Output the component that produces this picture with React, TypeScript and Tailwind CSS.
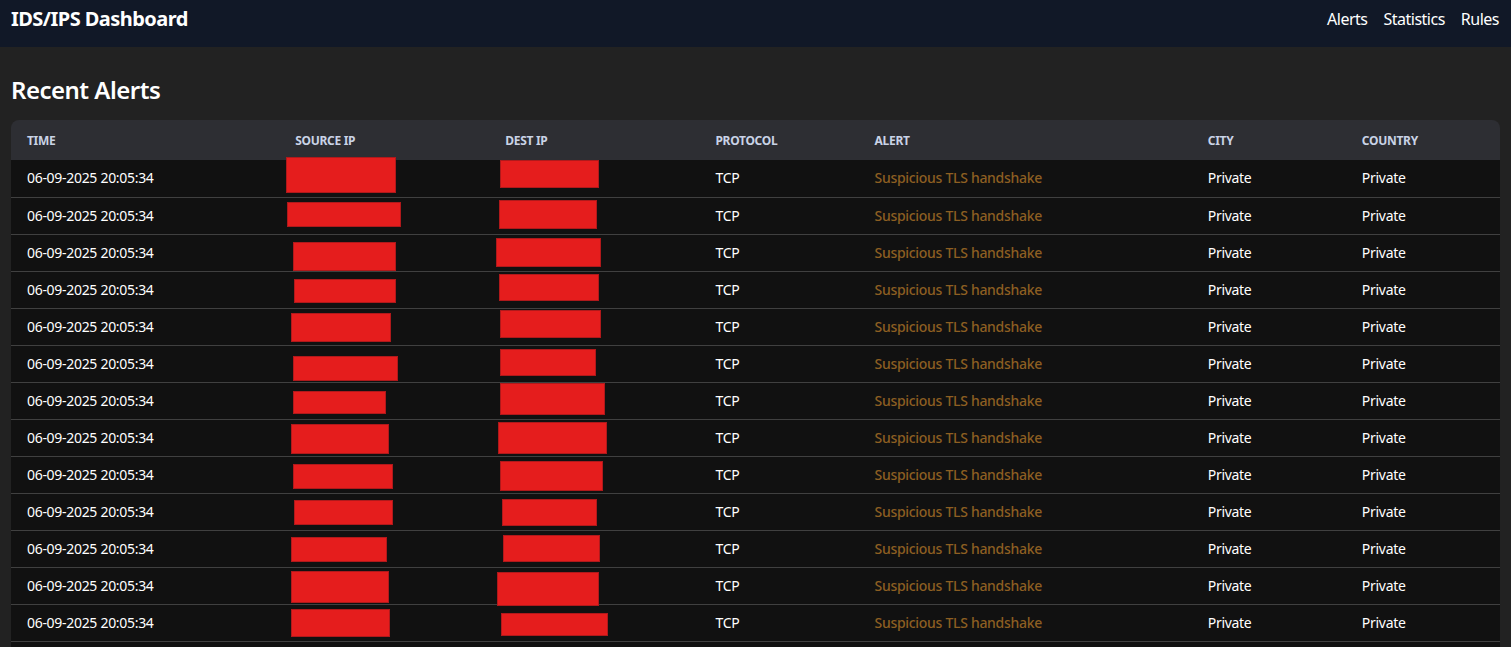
import React from "react";

type Box = [number, number, number, number];

type Alert = {
  time: string;
  protocol: string;
  alert: string;
  city: string;
  country: string;
  src: Box;
  dst: Box;
};

// redaction boxes: [left, top, width, height] relative to the cell
const redactions: { src: Box; dst: Box }[] = [
  { src: [7, -3, 110, 36], dst: [11, 0, 99, 28] },
  { src: [8, 4, 114, 25], dst: [10, 2, 98, 29] },
  { src: [14, 7, 103, 29], dst: [7, 3, 105, 29] },
  { src: [15, 7, 102, 24], dst: [10, 2, 100, 27] },
  { src: [12, 4, 100, 29], dst: [11, 1, 101, 28] },
  { src: [14, 10, 105, 25], dst: [11, 3, 96, 27] },
  { src: [14, 8, 93, 23], dst: [11, 0, 105, 32] },
  { src: [12, 4, 98, 30], dst: [9, 2, 109, 32] },
  { src: [14, 7, 100, 25], dst: [11, 4, 103, 30] },
  { src: [15, 6, 99, 25], dst: [13, 5, 95, 27] },
  { src: [12, 6, 96, 25], dst: [14, 4, 97, 27] },
  { src: [12, 3, 98, 32], dst: [8, 4, 102, 34] },
  { src: [12, 4, 99, 28], dst: [12, 8, 107, 23] },
  { src: [12, 8, 99, 28], dst: [12, 8, 100, 26] },
];

const alerts: Alert[] = redactions.map((r) => ({
  time: "06-09-2025 20:05:34",
  protocol: "TCP",
  alert: "Suspicious TLS handshake",
  city: "Private",
  country: "Private",
  src: r.src,
  dst: r.dst,
}));

function Redacted({ box }: { box: Box }) {
  const [left, top, width, height] = box;
  return (
    <div
      className="absolute bg-[#e51d1d] border border-[#b0191b]"
      style={{ left, top, width, height }}
    />
  );
}

export default function App() {
  return (
    <div
      className="min-h-screen bg-[#222222] text-white tracking-[-0.3px]"
      style={{ fontFamily: '"Noto Sans", "Open Sans", sans-serif' }}
    >
      <header className="h-[47px] bg-[#111827] px-[11px] pt-[5px] flex items-start justify-between">
        <h1 className="text-xl font-bold leading-7 tracking-[-0.55px]">IDS/IPS Dashboard</h1>
        <nav className="flex gap-4 pr-[1px] text-base leading-7 tracking-[-0.5px]">
          <a>Alerts</a>
          <a>Statistics</a>
          <a>Rules</a>
        </nav>
      </header>

      <main className="px-[11px] pt-[27px]">
        <h2 className="text-2xl font-semibold leading-8 mb-[14px] tracking-[-0.5px]">Recent Alerts</h2>
        <div className="rounded-lg overflow-hidden">
          <table className="w-full table-fixed border-collapse text-sm">
            <colgroup>
              <col className="w-[268px]" />
              <col className="w-[210px]" />
              <col className="w-[210px]" />
              <col className="w-[159px]" />
              <col className="w-[333px]" />
              <col className="w-[154px]" />
              <col className="w-[154px]" />
            </colgroup>
            <thead className="bg-[#2d2e33]">
              <tr className="h-[40px] text-left text-xs font-bold uppercase text-[#c9d3e6]">
                <th className="px-4 pt-[2px]">Time</th>
                <th className="px-4 pt-[2px]">Source IP</th>
                <th className="px-4 pt-[2px]">Dest IP</th>
                <th className="px-4 pt-[2px]">Protocol</th>
                <th className="px-4 pt-[2px]">Alert</th>
                <th className="px-4 pt-[2px]">City</th>
                <th className="px-4 pt-[2px]">Country</th>
              </tr>
            </thead>
            <tbody className="bg-[#111111]">
              {alerts.map((a, i) => (
                <tr key={i} className="h-[37px] border-b border-[#404040]">
                  <td className="px-4">{a.time}</td>
                  <td className="px-4 relative">
                    <Redacted box={a.src} />
                  </td>
                  <td className="px-4 relative">
                    <Redacted box={a.dst} />
                  </td>
                  <td className="px-4">{a.protocol}</td>
                  <td className="px-4 text-[#8d5f22] font-medium">{a.alert}</td>
                  <td className="px-4">{a.city}</td>
                  <td className="px-4">{a.country}</td>
                </tr>
              ))}
            </tbody>
          </table>
        </div>
      </main>
    </div>
  );
}
